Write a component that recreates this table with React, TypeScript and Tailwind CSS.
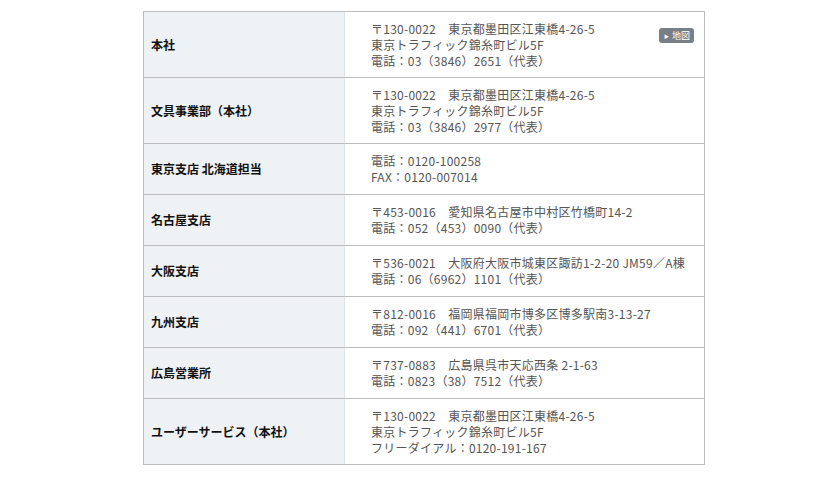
import React from "react";

type Row = { label: string; lines: string[]; map?: boolean };

const rows: Row[] = [
  { label: "本社", lines: ["〒130-0022　東京都墨田区江東橋4-26-5", "東京トラフィック錦糸町ビル5F", "電話：03（3846）2651（代表）"], map: true },
  { label: "文具事業部（本社）", lines: ["〒130-0022　東京都墨田区江東橋4-26-5", "東京トラフィック錦糸町ビル5F", "電話：03（3846）2977（代表）"] },
  { label: "東京支店 北海道担当", lines: ["電話：0120-100258", "FAX：0120-007014"] },
  { label: "名古屋支店", lines: ["〒453-0016　愛知県名古屋市中村区竹橋町14-2", "電話：052（453）0090（代表）"] },
  { label: "大阪支店", lines: ["〒536-0021　大阪府大阪市城東区諏訪1-2-20 JM59／A棟", "電話：06（6962）1101（代表）"] },
  { label: "九州支店", lines: ["〒812-0016　福岡県福岡市博多区博多駅南3-13-27", "電話：092（441）6701（代表）"] },
  { label: "広島営業所", lines: ["〒737-0883　広島県呉市天応西条 2-1-63", "電話：0823（38）7512（代表）"] },
  { label: "ユーザーサービス（本社）", lines: ["〒130-0022　東京都墨田区江東橋4-26-5", "東京トラフィック錦糸町ビル5F", "フリーダイアル：0120-191-167"] },
];

export default function App() {
  return (
    <div
      className="w-[840px] h-[477px] bg-white pt-[11px] pl-[143px]"
      style={{ fontFamily: '"Noto Sans CJK JP", "Noto Sans", sans-serif' }}
    >
      <div className="w-[562px] border border-[#bcbcbc] border-b-0">
        {rows.map((r, i) => (
          <div key={i} className="flex border-b border-[#bcbcbc]">
            <div className="w-[201px] shrink-0 bg-[#eff2f5] border-r border-[#dde2e6] flex items-center pl-[7px] text-[12px] font-bold text-[#111]">
              {r.label}
            </div>
            <div
              className={
                r.lines.length === 3
                  ? "flex-1 relative pl-[26px] pt-[9px] pb-[8px] text-[12px] leading-[16px] text-[#555] tracking-[0.25px]"
                  : "flex-1 relative pl-[26px] pt-[9px] pb-[9px] text-[12px] leading-[16px] text-[#555] tracking-[0.25px]"
              }
            >
              {r.lines.map((l, j) => (
                <div key={j} className="whitespace-nowrap">{l}</div>
              ))}
              {r.map && (
                <div className="absolute right-[10px] top-[16px] h-[15px] pl-[5px] pr-[4px] rounded-[3px] bg-[#7a7f86] text-white text-[9px] leading-[15px] flex items-center gap-[3px] tracking-normal">
                  <span className="text-[5px]">▶</span>
                  <span>地図</span>
                </div>
              )}
            </div>
          </div>
        ))}
      </div>
    </div>
  );
}
